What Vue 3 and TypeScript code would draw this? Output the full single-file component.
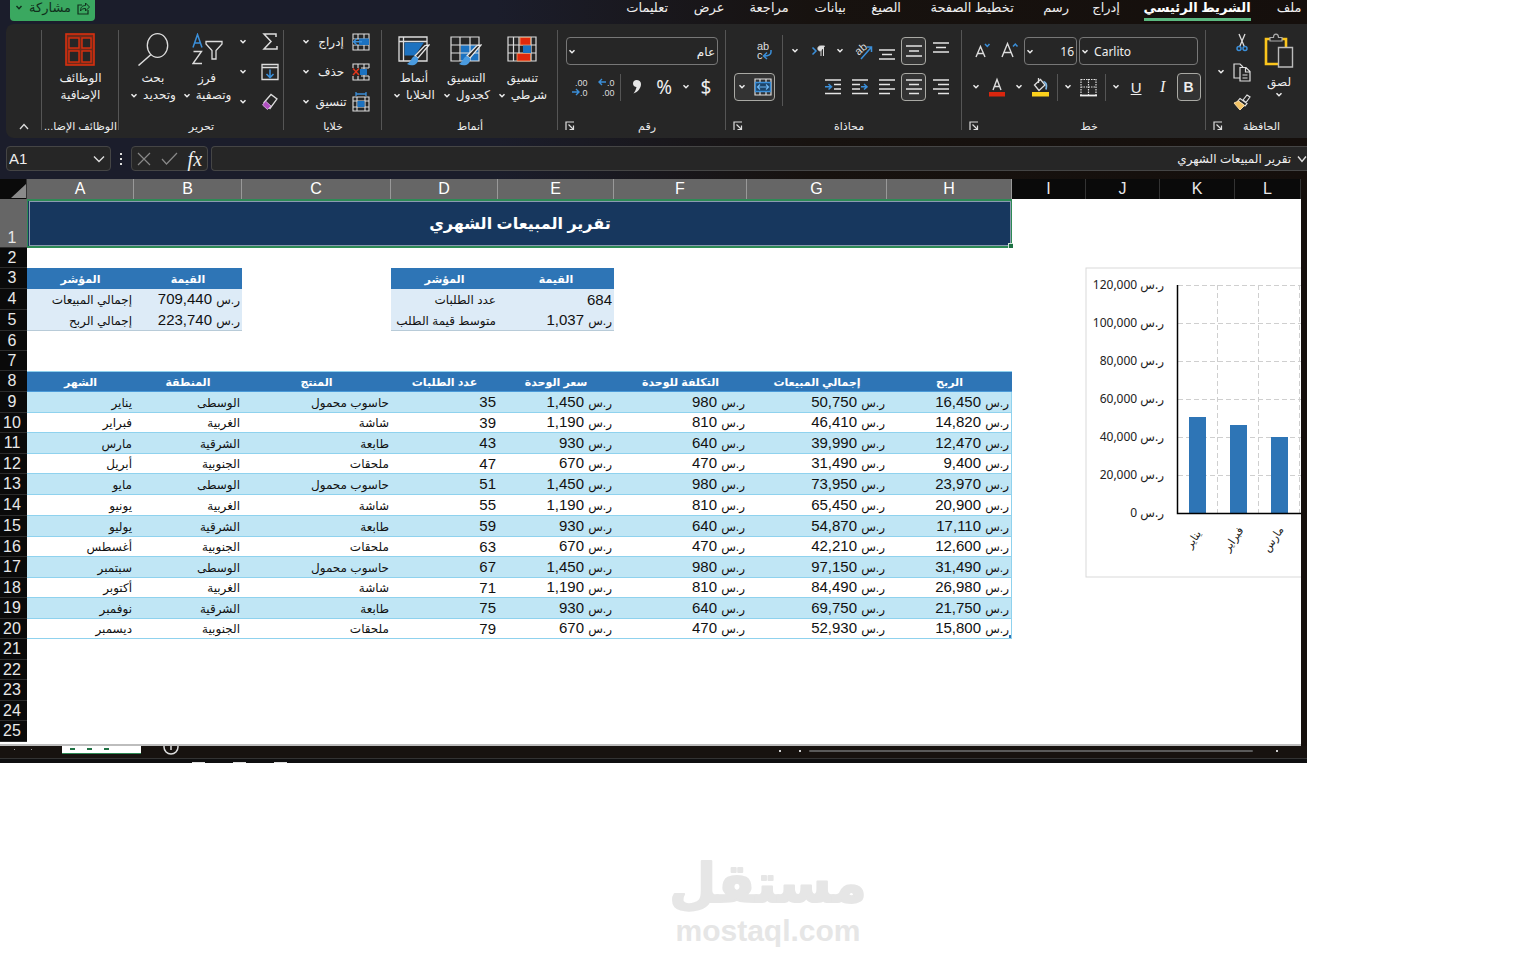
<script setup lang="ts">
import { ref } from 'vue'

interface Row {
  month: string
  region: string
  product: string
  orders: number
  price: number
  cost: number
}

const months = ['يناير', 'فبراير', 'مارس', 'أبريل', 'مايو', 'يونيو', 'يوليو', 'أغسطس', 'سبتمبر', 'أكتوبر', 'نوفمبر', 'ديسمبر']
const catalog = [
  { region: 'الوسطى', product: 'حاسوب محمول', price: 1450, cost: 980 },
  { region: 'الغربية', product: 'شاشة', price: 1190, cost: 810 },
  { region: 'الشرقية', product: 'طابعة', price: 930, cost: 640 },
  { region: 'الجنوبية', product: 'ملحقات', price: 670, cost: 470 },
]
const rows: Row[] = months.map((month, i) => ({ month, orders: 35 + i * 4, ...catalog[i % 4] }))
const sales = (r: Row) => r.orders * r.price
const profit = (r: Row) => r.orders * (r.price - r.cost)
const fmt = (n: number) => n.toLocaleString('en-US')

const tabs = ['ملف', 'الشريط الرئيسي', 'إدراج', 'رسم', 'تخطيط الصفحة', 'الصيغ', 'بيانات', 'مراجعة', 'عرض', 'تعليمات']
const letters = ['A', 'B', 'C', 'D', 'E', 'F', 'G', 'H', 'I', 'J', 'K', 'L']
const heads = ['الشهر', 'المنطقة', 'المنتج', 'عدد الطلبات', 'سعر الوحدة', 'التكلفة للوحدة', 'إجمالي المبيعات', 'الربح']
const emptyRows = [21, 22, 23, 24, 25]

const cellName = ref('A1')
const formula = ref('تقرير المبيعات الشهري')

const ticks = [120000, 100000, 80000, 60000, 40000, 20000, 0]
const plotH = 228
const tickY = (v: number) => 18 + Math.round(plotH * (1 - v / 120000))
const bars = rows.slice(0, 3).map((r, i) => {
  const h = Math.round((plotH * sales(r)) / 120000)
  return { x: 104 + i * 41, y: 246 - h, h, label: r.month, lx: 108 + i * 40 }
})
</script>

<template>
  <svg class="sprite" aria-hidden="true">
    <symbol id="chev" viewBox="0 0 8 6"><path d="M1.5 1.2 4 3.8 6.5 1.2" fill="none" stroke="#f0f0f0" stroke-width="1.4" /></symbol>
    <symbol id="launch" viewBox="0 0 10 10"><path d="M1 9V1h8M3.5 3.5l5 5M8.5 4.5v4h-4" fill="none" stroke="#ddd" stroke-width="1.2" /></symbol>
    <symbol id="al-right" viewBox="0 0 16 18"><path d="M0 2h16M5 6.5h11M0 11h16M5 15.5h11" stroke="#e4e4e4" stroke-width="1.4" /></symbol>
    <symbol id="al-left" viewBox="0 0 16 18"><path d="M0 2h16M0 6.5h11M0 11h16M0 15.5h11" stroke="#e4e4e4" stroke-width="1.4" /></symbol>
    <symbol id="al-center" viewBox="0 0 16 18"><path d="M0 2h16M3 6.5h10M0 11h16M3 15.5h10" stroke="#e4e4e4" stroke-width="1.4" /></symbol>
    <symbol id="v-top" viewBox="0 0 16 18"><path d="M0 1h16M3 5.5h10M0 10h16" stroke="#e4e4e4" stroke-width="1.3" /></symbol>
    <symbol id="v-mid" viewBox="0 0 16 18"><path d="M0 4h16M3 9h10M0 14h16" stroke="#e4e4e4" stroke-width="1.3" /></symbol>
    <symbol id="v-bot" viewBox="0 0 16 18"><path d="M0 8h16M3 12.5h10M0 17h16" stroke="#e4e4e4" stroke-width="1.3" /></symbol>
  </svg>

  <main class="page">
    <div class="window">
      <header class="topbar">
        <button class="share" type="button">
          <svg width="8" height="6"><path d="M1.5 1 4 3.8 6.5 1" fill="none" stroke="#10301c" stroke-width="1.4" /></svg>
          <span dir="rtl">مشاركة</span>
          <svg width="13" height="13" viewBox="0 0 13 13"><path d="M5 3H1v9h10V8" fill="none" stroke="#10301c" stroke-width="1.2" /><path d="M3.5 9c0-4 2-5.500 5-5.500V1l4 4-4 4V6.500c-2 0-4 .5-5 2.500z" fill="none" stroke="#10301c" /></svg>
        </button>
        <nav class="tabs" dir="rtl">
          <a v-for="(t, i) in tabs" :key="t" href="#" :class="{ active: i === 1 }"><span>{{ t }}</span></a>
        </nav>
      </header>

      <section class="ribbon">
        <div class="group end">
          <button class="fold" type="button" aria-label="طي الشريط"><svg width="10" height="7"><path d="M1 6 5 1.5 9 6" fill="none" stroke="#ddd" stroke-width="1.3" /></svg></button>
        </div>

        <div class="group addins">
          <div class="body mid">
            <button class="big" type="button">
              <svg width="30" height="33" viewBox="0 0 30 33"><rect x="1" y="1" width="28" height="31" fill="#6d2a1a" stroke="#d9300f" stroke-width="1.6" /><g fill="#262626" stroke="#d9300f" stroke-width="1.4"><rect x="4" y="5" width="10" height="10" /><rect x="17" y="5" width="9" height="10" /><rect x="4" y="18" width="10" height="11" /><rect x="17" y="18" width="9" height="11" /></g></svg>
              <span dir="rtl">الوظائف</span><span dir="rtl">الإضافية</span>
            </button>
          </div>
          <footer><b dir="rtl">الوظائف الإضا...</b></footer>
        </div>

        <div class="group">
          <div class="body editing">
            <button class="big" type="button">
              <svg width="31" height="33" viewBox="0 0 31 33"><ellipse cx="19.5" cy="12.5" rx="10.2" ry="11.8" fill="none" stroke="#ddd" stroke-width="1.3" /><path d="M13 21.5 0.5 32.5" stroke="#ddd" stroke-width="1.5" /></svg>
              <span dir="rtl">بحث</span><span dir="rtl" class="dd">وتحديد <svg class="chev"><use href="#chev" /></svg></span>
            </button>
            <button class="big" type="button">
              <svg width="31" height="33" viewBox="0 0 31 33"><path d="M1 14.5 5.5 1.5 10 14.5M2.5 10h6" fill="none" stroke="#3b8fd9" stroke-width="1.5" /><path d="M1.500 18.500h8l-8.500 12h9" fill="none" stroke="#ddd" stroke-width="1.4" /><path d="M14 8.500h16v2.500l-6 6.500v8.500h-4v-8.500l-6-6.500z" fill="none" stroke="#ddd" stroke-width="1.3" /></svg>
              <span dir="rtl">فرز</span><span dir="rtl" class="dd">وتصفية <svg class="chev"><use href="#chev" /></svg></span>
            </button>
            <div class="stack">
              <button type="button" aria-label="جمع تلقائي"><svg class="chev"><use href="#chev" /></svg><svg width="18" height="20" viewBox="0 0 18 20"><path d="M15 5V2H3l7 7.500L3 17h13v-3" fill="none" stroke="#ddd" stroke-width="1.5" /></svg></button>
              <button type="button" aria-label="تعبئة"><svg class="chev"><use href="#chev" /></svg><svg width="18" height="18" viewBox="0 0 18 18"><path d="M1 1.500h16v15H1zM1 4.500h16" fill="none" stroke="#ddd" stroke-width="1.3" /><path d="M9 6.500v8M5.500 11 9 14.500 12.500 11" fill="none" stroke="#3b8fd9" stroke-width="1.6" /></svg></button>
              <button type="button" aria-label="مسح"><svg class="chev"><use href="#chev" /></svg><svg width="18" height="18" viewBox="0 0 18 18"><path d="M3 9.500 10 1.500 16 6 9 15.500z" fill="none" stroke="#ddd" stroke-width="1.3" /><path d="M4.500 8 1.500 12l5 4.500L10 13z" fill="#b04fc0" stroke="#e0c0e8" stroke-width=".8" /></svg></button>
            </div>
          </div>
          <footer><b dir="rtl">تحرير</b></footer>
        </div>

        <div class="group">
          <div class="body">
            <div class="stack cells">
              <button type="button"><svg class="chev"><use href="#chev" /></svg><span dir="rtl">إدراج</span><svg width="18" height="18" viewBox="0 0 18 18"><path d="M1 1h16v16H1zM1 6h16M1 12h16M6 1v16M12 1v16" fill="none" stroke="#ddd" stroke-width="1.1" /><path d="M7 5.500h10v6.500H7z" fill="#1c72c0" /><path d="M1 6.500h6v5H1z" fill="#262626" /><path d="M10 8.800H1.500M5 5.500 1.500 8.800 5 12" fill="none" stroke="#3b8fd9" stroke-width="1.5" /></svg></button>
              <button type="button"><svg class="chev"><use href="#chev" /></svg><span dir="rtl">حذف</span><svg width="18" height="18" viewBox="0 0 18 18"><path d="M1 5V1h16v4M1 13v4h16v-4M6 1v4M12 1v16M6 13v4M9 5h8M9 13h8" fill="none" stroke="#ddd" stroke-width="1.1" /><path d="M8 6h7v6H8z" fill="#1c72c0" /><path d="M1 5.500 7 12M7 5.500 1 12" stroke="#e2361b" stroke-width="1.5" /></svg></button>
              <button type="button"><svg class="chev"><use href="#chev" /></svg><span dir="rtl">تنسيق</span><svg width="18" height="20" viewBox="0 0 18 20"><path d="M4 0v4M14 0v4M4 2h10" stroke="#3b8fd9" stroke-width="1.3" /><path d="M1 5h16v14H1zM1 9h16M1 15h16M5 5v14M13 5v14" fill="none" stroke="#ddd" stroke-width="1.1" /><path d="M5.500 9h7v6h-7z" fill="#1c72c0" /></svg></button>
            </div>
          </div>
          <footer><b dir="rtl">خلايا</b></footer>
        </div>

        <div class="group">
          <div class="body styles">
            <button class="big" type="button">
              <svg width="32" height="33" viewBox="0 0 32 33"><path d="M1 4h28v24H1zM5.500 4v24M1 8.500h28" fill="none" stroke="#ddd" stroke-width="1.3" /><path d="M6.500 9.500H26l-9 13H6.500z" fill="#1c72c0" /><path d="M31 12 20 25l-3-2L27 12.500z" fill="#262626" stroke="#e6e6e6" stroke-width="1.3" /><path d="M17 23c-4 1-3 5-8 8 5 3 12 1 11-6z" fill="#4a9be0" /></svg>
              <span dir="rtl">أنماط</span><span dir="rtl" class="dd">الخلايا <svg class="chev"><use href="#chev" /></svg></span>
            </button>
            <button class="big" type="button">
              <svg width="32" height="33" viewBox="0 0 32 33"><path d="M11 12h18v16H11z" fill="#1c72c0" /><path d="M1 4h28v24H1zM10 4v24M20 4v24M1 12h28M1 20h28" fill="none" stroke="#ddd" stroke-width="1.2" /><path d="M31 12 20 25l-3-2L27 12.500z" fill="#262626" stroke="#e6e6e6" stroke-width="1.3" /><path d="M17 23c-4 1-3 5-8 8 5 3 12 1 11-6z" fill="#4a9be0" /></svg>
              <span dir="rtl">التنسيق</span><span dir="rtl" class="dd">كجدول <svg class="chev"><use href="#chev" /></svg></span>
            </button>
            <button class="big" type="button">
              <svg width="30" height="33" viewBox="0 0 30 33"><path d="M1 4h28v24H1zM6.500 4v24M12 4v24M24 4v24M1 12h28M1 20h28" fill="none" stroke="#ddd" stroke-width="1.2" /><path d="M13 4.500h10.500V12H13zM10 20.500h13.500V28H10z" fill="#e0290c" stroke="#f0a070" stroke-width=".8" /><path d="M16 12.500h8V20h-8z" fill="#1c72c0" /></svg>
              <span dir="rtl">تنسيق</span><span dir="rtl" class="dd">شرطي <svg class="chev"><use href="#chev" /></svg></span>
            </button>
          </div>
          <footer><b dir="rtl">أنماط</b></footer>
        </div>

        <div class="group">
          <div class="body rows">
            <label class="combo wide"><svg class="chev"><use href="#chev" /></svg><select dir="rtl" aria-label="تنسيق الأرقام"><option>عام</option></select></label>
            <div class="line number">
              <button type="button" aria-label="إنقاص الخانات"><svg width="18" height="20" viewBox="0 0 18 20"><text x="4" y="9" class="tiny">.00</text><text x="9" y="19" class="tiny">.0</text><path d="M1 15h7M5 12l3 3-3 3" fill="none" stroke="#3b8fd9" stroke-width="1.4" /></svg></button>
              <button type="button" aria-label="زيادة الخانات"><svg width="18" height="20" viewBox="0 0 18 20"><text x="9" y="9" class="tiny">.0</text><text x="4" y="19" class="tiny">.00</text><path d="M8 5H1M4 2 1 5l3 3" fill="none" stroke="#3b8fd9" stroke-width="1.4" /></svg></button>
              <i class="bar"></i>
              <button type="button" aria-label="نمط الفاصلة"><svg width="10" height="16" viewBox="0 0 10 16"><path d="M4.500 1C2.500 1 1 2.500 1 4.500S2.500 8 4.500 8C4 10.500 3 12.500 1.500 14.500 6 13 9 9 9 5 9 2.500 7 1 4.500 1z" fill="#e6e6e6" /></svg></button>
              <button type="button" class="sym">%</button>
              <button type="button" aria-label="المزيد"><svg class="chev"><use href="#chev" /></svg></button>
              <button type="button" class="sym">$</button>
            </div>
          </div>
          <footer><button class="launch" type="button" aria-label="إعدادات الرقم"><svg width="10" height="10"><use href="#launch" /></svg></button><b dir="rtl">رقم</b></footer>
        </div>

        <div class="group">
          <div class="body align">
            <div class="rows first">
              <button type="button" aria-label="التفاف النص"><svg width="18" height="24" viewBox="0 0 18 24"><text x="2" y="11" class="abc">ab</text><text x="2" y="20" class="abc">c</text><path d="M16 11v2c0 3-3 4-7 4M12 13.500 8.500 17l3.500 3" fill="none" stroke="#3b8fd9" stroke-width="1.5" /></svg></button>
              <button type="button" class="boxed merge" aria-label="دمج وتوسيط"><svg class="chev"><use href="#chev" /></svg><svg width="18" height="18" viewBox="0 0 18 18"><path d="M1 1h16v16H1zM6 1v3M12 1v3M6 14v3M12 14v3" fill="none" stroke="#ddd" stroke-width="1.2" /><path d="M1.500 4.500h15v9h-15z" fill="#1d4468" stroke="#3b8fd9" stroke-width="1.3" /><path d="M3.500 9h11M6 6.500 3.500 9 6 11.500M12 6.500 14.500 9 12 11.500" fill="none" stroke="#6cb4f0" stroke-width="1.2" /></svg></button>
            </div>
            <i class="bar tall"></i>
            <div class="rows">
              <div class="line">
                <button type="button" aria-label="المزيد" class="s"><svg class="chev"><use href="#chev" /></svg></button>
                <button type="button" aria-label="اتجاه النص" class="m"><svg width="14" height="14" viewBox="0 0 14 14"><path d="M1.500 3.500 5 7l-3.500 3.500" fill="none" stroke="#3b8fd9" stroke-width="1.5" /><path d="M10 12V2M12.500 12V2M13.500 2H9.500C6 2 6 7 9.500 7z" fill="#ddd" stroke="#ddd" /></svg></button>
                <button type="button" aria-label="المزيد" class="s"><svg class="chev"><use href="#chev" /></svg></button>
                <button type="button" aria-label="الاتجاه" class="m"><svg width="20" height="24" viewBox="0 0 20 24"><text x="3" y="14" class="abc" transform="rotate(-40 8 12)">ab</text><path d="M8 20 18.500 8M13.500 8h5v5" fill="none" stroke="#3b8fd9" stroke-width="1.5" /></svg></button>
                <button type="button" aria-label="محاذاة للأسفل" class="w"><svg width="16" height="18"><use href="#v-bot" /></svg></button>
                <button type="button" aria-label="محاذاة للوسط" class="w"><em class="boxed"><svg width="16" height="18"><use href="#v-mid" /></svg></em></button>
                <button type="button" aria-label="محاذاة للأعلى" class="w"><svg width="16" height="18"><use href="#v-top" /></svg></button>
              </div>
              <div class="line right">
                <button type="button" aria-label="زيادة المسافة البادئة" class="w"><svg width="16" height="18" viewBox="0 0 16 18"><path d="M0 2h16M9 6.500h7M9 11h7M0 15.500h16" stroke="#e4e4e4" stroke-width="1.4" /><path d="M0 8.800h6M3.500 6 6.500 8.800l-3 2.700" fill="none" stroke="#3b8fd9" stroke-width="1.5" /></svg></button>
                <button type="button" aria-label="إنقاص المسافة البادئة" class="w"><svg width="16" height="18" viewBox="0 0 16 18"><path d="M0 2h16M0 6.500h8M0 11h8M0 15.500h16" stroke="#e4e4e4" stroke-width="1.4" /><path d="M9 8.800h6M12 6l3 2.800-3 2.700" fill="none" stroke="#3b8fd9" stroke-width="1.5" /></svg></button>
                <button type="button" aria-label="محاذاة لليسار" class="w"><svg width="16" height="18"><use href="#al-left" /></svg></button>
                <button type="button" aria-label="توسيط" class="w"><em class="boxed"><svg width="16" height="18"><use href="#al-center" /></svg></em></button>
                <button type="button" aria-label="محاذاة لليمين" class="w"><svg width="16" height="18"><use href="#al-right" /></svg></button>
              </div>
            </div>
          </div>
          <footer><button class="launch" type="button" aria-label="إعدادات المحاذاة"><svg width="10" height="10"><use href="#launch" /></svg></button><b dir="rtl">محاذاة</b></footer>
        </div>

        <div class="group">
          <div class="body rows font">
            <div class="line">
              <button type="button" aria-label="تصغير الخط" class="w"><svg width="18" height="20" viewBox="0 0 18 20"><path d="M2 16 6.500 5.500 11 16M3.500 12.500h6" fill="none" stroke="#ddd" stroke-width="1.4" /><path d="M11 3l2.300 2.500L15.500 3" fill="none" stroke="#3b8fd9" stroke-width="1.5" /></svg></button>
              <button type="button" aria-label="تكبير الخط" class="w"><svg width="18" height="20" viewBox="0 0 18 20"><path d="M1 16 6.500 2.500 12 16M3 11.500h7" fill="none" stroke="#ddd" stroke-width="1.4" /><path d="M12 5.500 14.300 3l2.200 2.500" fill="none" stroke="#3b8fd9" stroke-width="1.5" /></svg></button>
              <label class="combo size"><svg class="chev"><use href="#chev" /></svg><select aria-label="حجم الخط" dir="rtl"><option>16</option></select></label>
              <label class="combo face"><svg class="chev"><use href="#chev" /></svg><select aria-label="الخط"><option>Carlito</option></select></label>
            </div>
            <div class="line fontrow">
              <button type="button" aria-label="المزيد"><svg class="chev"><use href="#chev" /></svg></button>
              <button type="button" aria-label="لون الخط"><svg width="18" height="20" viewBox="0 0 18 20"><path d="M5 13 9 2.500 13 13M6.500 9.500h5" fill="none" stroke="#ddd" stroke-width="1.4" /><path d="M1 15h16v4.500H1z" fill="#d9260e" /></svg></button>
              <button type="button" aria-label="المزيد"><svg class="chev"><use href="#chev" /></svg></button>
              <button type="button" aria-label="لون التعبئة"><svg width="18" height="20" viewBox="0 0 18 20"><path d="M3.500 8 9.500 2.500 14 8 8 13.500zM7.500 1v5" fill="none" stroke="#ddd" stroke-width="1.3" /><path d="M12.500 4.500c3 1 3.500 4 2.500 8" fill="none" stroke="#7fb6e4" stroke-width="1.8" /><path d="M1 15h17v4.500H1z" fill="#fbd01c" /></svg></button>
              <i class="bar"></i>
              <button type="button" aria-label="المزيد"><svg class="chev"><use href="#chev" /></svg></button>
              <button type="button" aria-label="حدود"><svg width="17" height="19" viewBox="0 0 17 19"><path d="M1 1.500h15M1 9h15M1 1v16M8.500 1v16M16 1v16" fill="none" stroke="#ddd" stroke-width="1.2" stroke-dasharray="1.5 1" /><path d="M0 17.500h17" stroke="#eee" stroke-width="1.8" /></svg></button>
              <i class="bar"></i>
              <button type="button" aria-label="المزيد"><svg class="chev"><use href="#chev" /></svg></button>
              <button type="button" class="u">U</button>
              <button type="button" class="it">I</button>
              <button type="button" class="boxed bold">B</button>
            </div>
          </div>
          <footer><button class="launch" type="button" aria-label="إعدادات الخط"><svg width="10" height="10"><use href="#launch" /></svg></button><b dir="rtl">خط</b></footer>
        </div>

        <div class="group last">
          <div class="body clip">
            <div class="stack">
              <button type="button" aria-label="قص"><svg width="18" height="19" viewBox="0 0 18 19"><path d="M6 1l5.500 13M12 1 6.500 14" stroke="#ddd" stroke-width="1.3" /><g fill="none" stroke="#3b8fd9" stroke-width="1.5"><circle cx="6" cy="15.5" r="2" /><circle cx="12" cy="15.5" r="2" /></g></svg></button>
              <button type="button" aria-label="نسخ"><svg class="chev"><use href="#chev" /></svg><svg width="18" height="19" viewBox="0 0 18 19"><path d="M7 15H1V1h6l3 3M7 4.500h6l4 4V18H7zM12.500 4.500V9H17M9.500 12h5M9.500 15h5" fill="none" stroke="#ddd" stroke-width="1.2" /></svg></button>
              <button type="button" aria-label="نسخ التنسيق"><svg width="18" height="17" viewBox="0 0 18 17"><path d="M10 6l4-5 3 2-4 5.500zM7 4.500l7 5-2 2.500-7-5z" fill="none" stroke="#e2e2e2" stroke-width="1.2" /><path d="M5.500 7 1 9l6 7 4.500-4.500z" fill="#f3c264" stroke="#f6dca8" /></svg></button>
            </div>
            <button class="big" type="button">
              <svg width="30" height="35" viewBox="0 0 30 35"><path d="M14 31H2V6h20v8" fill="none" stroke="#fbc51c" stroke-width="2.6" /><path d="M6 8V4.500h3.500c0-4.500 5-4.500 5 0H18V8z" fill="#262626" stroke="#aaa" stroke-width="1.2" /><path d="M14.500 14.500h14v19.500h-14z" fill="#262626" stroke="#bbb" stroke-width="1.4" /></svg>
              <span dir="rtl">لصق</span><svg class="chev"><use href="#chev" /></svg>
            </button>
          </div>
          <footer><button class="launch" type="button" aria-label="إعدادات الحافظة"><svg width="10" height="10"><use href="#launch" /></svg></button><b dir="rtl">الحافظة</b></footer>
        </div>
      </section>

      <section class="formula">
        <div class="namebox"><input v-model="cellName" aria-label="مربع الاسم" /><svg width="12" height="8"><path d="M1 1.500 6 6.500 11 1.500" fill="none" stroke="#ddd" stroke-width="1.4" /></svg></div>
        <svg class="dots" width="4" height="14"><path d="M1 1h2v2H1zM1 6h2v2H1zM1 11h2v2H1z" fill="#ddd" /></svg>
        <div class="fx">
          <button type="button" aria-label="إلغاء"><svg width="14" height="14"><path d="M1 1l12 12M13 1 1 13" stroke="#888" stroke-width="1.2" /></svg></button>
          <button type="button" aria-label="إدخال"><svg width="17" height="13"><path d="M1 7l4.500 5L16 1" fill="none" stroke="#888" stroke-width="1.2" /></svg></button>
          <button type="button" class="fn">fx</button>
        </div>
        <div class="fbox"><input v-model="formula" dir="rtl" aria-label="شريط الصيغة" /><svg width="10" height="8"><path d="M1 1.500 5 6.500 9 1.500" fill="none" stroke="#ddd" stroke-width="1.4" /></svg></div>
      </section>

      <section class="sheet">
        <table>
          <colgroup><col class="c0" /><col v-for="l in letters" :key="l" :class="'c' + l" /></colgroup>
          <thead>
            <tr><th class="corner"><svg width="15" height="14"><path d="M15 0v14H0z" fill="#8a8a8a" /></svg></th><th v-for="(l, i) in letters" :key="l" :class="{ sel: i < 8 }">{{ l }}</th></tr>
          </thead>
          <tbody>
            <tr class="r1"><th class="sel">1</th><td colspan="8" class="title" dir="rtl"><div>{{ formula }}<i></i></div></td><td colspan="4"></td></tr>
            <tr><th>2</th><td colspan="12"></td></tr>
            <tr class="tall kh"><th>3</th><td class="b">المؤشر</td><td class="b">القيمة</td><td></td><td class="b">المؤشر</td><td class="b">القيمة</td><td colspan="7"></td></tr>
            <tr class="tall kv"><th>4</th><td class="k"><span class="ar">إجمالي المبيعات</span></td><td class="k"><span class="ar">ر.س</span> 709,440</td><td></td><td class="k"><span class="ar">عدد الطلبات</span></td><td class="k">684</td><td colspan="7"></td></tr>
            <tr class="tall kv kl"><th>5</th><td class="k"><span class="ar">إجمالي الربح</span></td><td class="k"><span class="ar">ر.س</span> 223,740</td><td></td><td class="k"><span class="ar">متوسط قيمة الطلب</span></td><td class="k"><span class="ar">ر.س</span> 1,037</td><td colspan="7"></td></tr>
            <tr><th>6</th><td colspan="12"></td></tr>
            <tr><th>7</th><td colspan="12"></td></tr>
            <tr class="tall dh"><th>8</th><td v-for="h in heads" :key="h" class="b">{{ h }}</td><td colspan="4"></td></tr>
            <tr v-for="(r, i) in rows" :key="r.month" class="d" :class="{ band: i % 2 === 0, tall: i % 2 === 0 || i === 5 }">
              <th>{{ i + 9 }}</th>
              <td><span class="ar">{{ r.month }}</span></td>
              <td><span class="ar">{{ r.region }}</span></td>
              <td><span class="ar">{{ r.product }}</span></td>
              <td>{{ r.orders }}</td>
              <td><span class="ar">ر.س</span> {{ fmt(r.price) }}</td>
              <td><span class="ar">ر.س</span> {{ fmt(r.cost) }}</td>
              <td><span class="ar">ر.س</span> {{ fmt(sales(r)) }}</td>
              <td class="edge" :class="{ corner2: i === 11 }"><span class="ar">ر.س</span> {{ fmt(profit(r)) }}</td>
              <td colspan="4" class="none"></td>
            </tr>
            <tr v-for="n in emptyRows" :key="n" :class="{ tall: n % 2 === 1 }"><th>{{ n }}</th><td colspan="12"></td></tr>
          </tbody>
        </table>

        <svg class="chart" width="230" height="311" role="img" aria-label="إجمالي المبيعات">
          <rect x="1" y="1" width="300" height="309" fill="#fff" stroke="#d9d9d9" />
          <g stroke="#cfcfcf" stroke-dasharray="5 3">
            <path v-for="t in ticks.slice(0, 6)" :key="t" :d="`M93 ${tickY(t)}.5H230`" />
            <path d="M132.500 18V246M173.500 18V246M214.500 18V246" />
          </g>
          <rect v-for="b in bars" :key="b.x" :x="b.x" :y="b.y" width="17" :height="b.h" fill="#2e75b6" />
          <path d="M92.500 18V246.500H230" fill="none" stroke="#000" stroke-width="1.5" />
          <text v-for="t in ticks" :key="t" x="79" :y="tickY(t) + 4" class="tick">ر.س {{ fmt(t) }}</text>
          <text v-for="b in bars" :key="b.label" :x="b.lx" y="276" class="cat" :transform="`rotate(-56 ${b.lx} 272)`">{{ b.label }}</text>
        </svg>
      </section>

      <footer class="tabsbar">
        <span class="nav"><i></i><i></i></span><span class="sheettab"><i></i><i></i><i></i></span>
        <svg class="plus" width="16" height="9"><circle cx="8" cy="1" r="7" fill="none" stroke="#ddd" stroke-width="1.5" /><path d="M8 0v4" stroke="#ddd" stroke-width="1.5" /></svg>
        <span class="marks"><i></i><i></i></span><span class="scroll"></span><span class="marks tail"><i></i></span>
      </footer>
      <footer class="status"><i></i><i></i><i></i></footer>
    </div>

    <svg class="brand" width="200" height="100" viewBox="0 0 200 100" role="img" aria-label="mostaql.com">
      <text x="100" y="44" class="ar-logo">مستقل</text>
      <text x="100" y="83" class="en-logo">mostaql.com</text>
    </svg>
  </main>
</template>

<style>
body { margin: 0; background: #fff; }
</style>

<style scoped>
.sprite { position: absolute; width: 0; height: 0; }
.page { font-family: "Liberation Sans", "DejaVu Sans", sans-serif; color: #eee; }
.window { width: 85.1%; overflow: hidden; background: linear-gradient(90deg, #1b1d2b 0, #1b1d2b 38%, #17120f 62%, #150f0c 100%); }
button { background: none; border: 0; padding: 0; margin: 0; color: #eee; font: inherit; display: flex; align-items: center; justify-content: center; }
svg { flex: none; display: block; }
.chev { width: 8px; height: 6px; }

.topbar { display: flex; justify-content: space-between; height: 24px; }
.share { margin-left: 10px; width: 85px; height: 21px; background: #3aa860; color: #10301c; border-radius: 0 0 4px 4px; gap: 6px; font-size: 13px; line-height: 16px; padding-bottom: 5px; }
.tabs { display: grid; grid-template-columns: 36px 148px 34px 66px 102px 70px 42px 80px 40px 84px; }
.tabs a { color: #eee; text-decoration: none; font-size: 13px; line-height: 16px; text-align: center; white-space: nowrap; }
.tabs a span { display: inline-block; height: 18px; }
.tabs a.active { font-weight: bold; color: #fff; }
.tabs a.active span { border-bottom: 3px solid #5cb880; }

.ribbon { margin-left: 6px; height: 114px; background: #262626; border-radius: 8px 0 0 8px; display: grid; grid-template-columns: 36fr 77fr 165fr 98fr 176fr 168fr 236fr 244fr 101fr; font-size: 12px; }
.group { position: relative; display: flex; flex-direction: column; justify-content: space-between; min-width: 0; }
.group::after { content: ""; position: absolute; right: 0; top: 6px; bottom: 8px; width: 1px; background: #555; }
.group.last::after { display: none; }
.group > footer { display: flex; align-items: center; height: 24px; line-height: 16px; padding: 0 7px; white-space: nowrap; }
.group > footer b { flex: 1; text-align: center; font-weight: normal; font-size: 11px; }
.group.addins > footer { padding: 0 1px; }
.group.end { justify-content: flex-end; }
.fold { height: 24px; }
.body { display: flex; height: 88px; padding-top: 9px; box-sizing: border-box; }
.body.mid { justify-content: center; }
.big { flex-direction: column; justify-content: flex-start; line-height: 17px; white-space: nowrap; font-size: 12px; }
.big > svg:first-child { margin-bottom: 4px; }
.dd { display: flex; align-items: center; gap: 5px; }
.editing { padding-left: 7px; }
.editing .big { width: 54px; }
.stack { display: flex; flex-direction: column; margin-top: -6px; height: 90px; }
.stack button { height: 30px; gap: 14px; justify-content: flex-end; width: 45px; }
.stack.cells { width: 100%; padding-right: 12px; box-sizing: border-box; }
.stack.cells button { width: 100%; gap: 5px; }
.stack.cells button span { width: 32px; }
.styles { padding: 9px 7px 0; justify-content: space-around; }
.rows { display: flex; flex-direction: column; gap: 8px; }
.body.rows { padding: 13px 8px 0; height: 88px; }
.combo { position: relative; height: 28px; box-sizing: border-box; border: 1px solid #777; border-radius: 4px; display: block; }
.combo svg { position: absolute; left: 1px; top: 11px; pointer-events: none; }
.combo select { appearance: none; width: 100%; height: 26px; border: 0; background: none; color: #eee; font: 12px "Noto Sans", "DejaVu Sans", sans-serif; padding: 0 2px 0 14px; }
.combo.size { width: 53px; margin-left: 1px; }
.combo.face { width: 119px; margin-left: 2px; }
.line { display: flex; align-items: center; height: 28px; }
.line .w { width: 27px; }
.line .s { width: 24px; }
.line .m { width: 21px; }
.line.right { justify-content: flex-end; }
.bar { width: 1px; height: 27px; background: #555; flex: none; }
.bar.tall { height: 71px; margin-top: -2px; margin-left: 7px; }
.number { display: grid; grid-template-columns: 27px 27px 1px 31px 24px 20px 20px; }
.sym { font: 19px "Noto Sans", sans-serif; }
.tiny { font: 9px "Liberation Sans", sans-serif; fill: #ddd; }
.abc { font: 11px "Liberation Sans", sans-serif; fill: #ddd; }
.align { padding: 13px 0 0 8px; }
.align .first button { height: 28px; width: 41px; box-sizing: border-box; }
.align .first button:first-child { padding-left: 18px; }
.boxed { border: 1px solid #a9a9a4; border-radius: 4px; background: #333; box-sizing: border-box; }
em.boxed { width: 25px; height: 28px; display: flex; align-items: center; justify-content: center; }
.merge { gap: 8px; }
.font.body { padding-left: 7px; }
.fontrow { display: grid; grid-template-columns: 14px 28px 16px 26px 8px 14px 26px 8px 14px 26px 27px 25px; justify-items: center; }
.fontrow .bar { justify-self: center; }
.bold { width: 24px; height: 28px; font-weight: bold; font-size: 14px; }
.u { font-size: 15px; text-decoration: underline; }
.it { font: italic 16px "Liberation Serif", serif; }
.clip .stack { width: 48px; }
.clip .stack button { gap: 8px; }
.clip .big { width: 50px; line-height: 20px; }

.formula { display: flex; align-items: center; height: 41px; padding-left: 6px; }
.namebox, .fx, .fbox { height: 25px; box-sizing: border-box; border: 1px solid #454545; border-radius: 4px; background: #262626; display: flex; align-items: center; }
.namebox { width: 105px; padding-right: 5px; }
.formula input { flex: 1; min-width: 0; border: 0; background: none; color: #eee; font: 15px "Liberation Sans", "DejaVu Sans", sans-serif; padding: 0 2px; outline: 0; }
.dots { margin: 0 8px; }
.fx { width: 77px; justify-content: space-around; }
.fn { font: italic 20px "Liberation Serif", serif; line-height: 20px; }
.fbox { flex: 1; margin-left: 3px; border-right: 0; border-radius: 4px 0 0 4px; }
.formula .fbox input { font-size: 12px; padding-right: 6px; }

.sheet { position: relative; overflow: hidden; background: #fff; margin-right: 6px; border-bottom: 2px solid #bdbdbd; padding-bottom: 2px; }
table { border-collapse: separate; border-spacing: 0; table-layout: fixed; width: 100%; color: #111; font-size: 15px; }
.c0 { width: 27px; }
.cA { width: 107px; }
.cB { width: 108px; }
.cC { width: 149px; }
.cD { width: 107px; }
.cE { width: 116px; }
.cF { width: 133px; }
.cG { width: 140px; }
.cH { width: 125px; }
.cI, .cJ { width: 74px; }
.cK { width: 75px; }
th, td { padding: 0; height: 20px; line-height: 18px; box-sizing: border-box; white-space: nowrap; overflow: hidden; }
.tall > * { height: 21px; }
th { background: #0a0a0a; color: #e8e8e8; font-weight: normal; font-size: 16px; }
thead th { border-right: 1px solid #333; line-height: 20px; }
thead th.sel { border-right-color: #999; color: #fff; }
th.sel { background: #666; }
tbody th { border-bottom: 1px solid #2c2c2c; padding-right: 3px; }
.corner svg { margin: 4px 0 0 11px; }
td { direction: rtl; text-align: right; padding-right: 2px; }
.ar { font-size: 12px; }
.r1 > * { height: 49px; }
.r1 th { vertical-align: bottom; }
td.title { background: #17375e; border: 2px solid #2d8a55; border-left-width: 1px; padding: 0; overflow: visible; }
.title div { position: relative; height: 45px; line-height: 43px; box-sizing: border-box; border: 1px solid #8b9bb0; text-align: center; color: #fff; font-weight: bold; font-size: 16px; }
.title i { position: absolute; right: -3px; bottom: -3px; width: 4px; height: 4px; background: #1f7244; border: 1px solid #cfe5d8; border-width: 1px 0 0 1px; }
.b { background: #2e75b6; color: #fff; font-weight: bold; font-size: 11px; text-align: center; padding: 0; }
.k { background: #ddebf7; }
.kl .k { border-bottom: 1px solid #b8cbd8; }
.dh .b { border-top: 1px solid #8fd0ee; border-bottom: 1px solid #4a9ad8; }
.d td { border-bottom: 1px solid #8fd2ee; }
.d td.none { border: 0; background: #fff; }
.d .edge { border-right: 1px solid #8fd2ee; }
.band td { background: #c0e6f5; }
.corner2 { background: linear-gradient(#2e75b6, #2e75b6) right bottom / 3px 3px no-repeat; }
.chart { position: absolute; left: 1085px; top: 88px; }
.tick { font: 12px "Noto Sans", "DejaVu Sans", sans-serif; fill: #222; direction: rtl; text-anchor: start; }
.cat { font: 11px "DejaVu Sans", sans-serif; fill: #222; direction: rtl; text-anchor: middle; }

.tabsbar { display: flex; height: 12px; border-bottom: 1px solid #333; align-items: flex-start; background: #17120f; }
.nav { width: 62px; display: flex; gap: 16px; padding: 3px 0 0 14px; box-sizing: border-box; }
.nav i { width: 1px; height: 1px; background: #999; }
.sheettab { width: 79px; height: 8px; background: #fff; border-bottom: 1px solid #2d8a55; display: flex; gap: 12px; padding: 2px 0 0 8px; box-sizing: border-box; }
.sheettab i { width: 5px; height: 2px; background: #1f7244; }
.plus { margin-left: 22px; }
.marks { display: flex; gap: 18px; margin: 4px 8px 0 auto; }
.marks i { width: 2px; height: 2px; background: #ccc; }
.marks.tail { margin: 4px 29px 0 23px; }
.scroll { margin-top: 4px; width: 34%; height: 2px; border-radius: 1px; background: #5a5a5a; }
.status { height: 4px; background: #0f0f10; display: flex; gap: 28px; align-items: flex-end; padding-left: 192px; }
.status i { width: 13px; height: 1px; background: #ddd; }
.brand { display: block; margin: 95px auto 0; overflow: visible; }
.ar-logo { font: bold 54px "DejaVu Sans", sans-serif; fill: #e6e6e6; text-anchor: middle; stroke: #e6e6e6; stroke-width: 2; stroke-linejoin: round; }
.en-logo { font: bold 30px "Liberation Sans", sans-serif; fill: #e6e6e6; text-anchor: middle; }
</style>
